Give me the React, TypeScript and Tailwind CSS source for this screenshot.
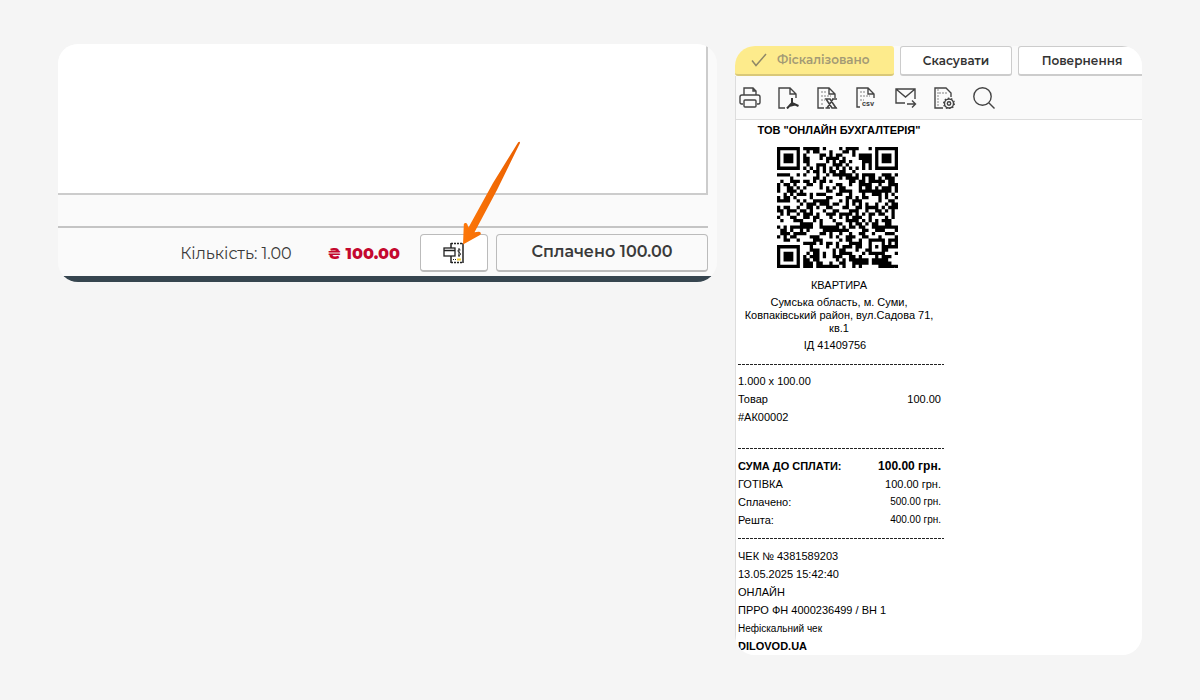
import { ReactNode } from 'react'

const CHECK_URL =
    'https://cabinet.tax.gov.ua/cashregs/check?fn=4000236499&id=4381589203&sm=100.00&time=154240&date=20250513'

// QR version 5, level L: 37 modules a side, one block of 108 data + 26 ecc bytes
const SIZE = 37
const DATA_LEN = 108
const ECC_LEN = 26
const FORMAT = '111100010011101'

function gfMul(a: number, b: number) {
    let r = 0
    while (b) {
        if (b & 1) r ^= a
        a = a & 128 ? (a << 1) ^ 0x11d : a << 1
        b >>= 1
    }
    return r
}

function codewords(text: string) {
    let bits = '0100' + text.length.toString(2).padStart(8, '0')
    for (const ch of text) bits += ch.charCodeAt(0).toString(2).padStart(8, '0')
    bits = (bits + '0000').slice(0, DATA_LEN * 8)
    const data = (bits.match(/.{1,8}/g) || []).map((b) => parseInt(b.padEnd(8, '0'), 2))
    for (let i = 0; data.length < DATA_LEN; i++) data.push(i % 2 ? 17 : 236)

    let gen = [1]
    let root = 1
    for (let i = 0; i < ECC_LEN; i++) {
        const next = [...gen, 0]
        gen.forEach((g, k) => (next[k + 1] ^= gfMul(g, root)))
        gen = next
        root = gfMul(root, 2)
    }
    const rest = [...data, ...Array(ECC_LEN).fill(0)]
    for (let i = 0; i < DATA_LEN; i++) {
        const lead = rest[i]
        gen.forEach((g, k) => (rest[i + k] ^= gfMul(g, lead)))
    }
    return [...data, ...rest.slice(DATA_LEN)]
}

function makeQr(text: string) {
    const m: number[][] = Array.from({ length: SIZE }, () => Array(SIZE).fill(-1))
    const square = (cy: number, cx: number, reach: number, light: number[]) => {
        for (let y = -reach; y <= reach; y++)
            for (let x = -reach; x <= reach; x++)
                if (m[cy + y] && m[cy + y][cx + x] !== undefined)
                    m[cy + y][cx + x] = light.includes(Math.max(Math.abs(x), Math.abs(y))) ? 0 : 1
    }
    square(3, 3, 4, [2, 4])
    square(3, SIZE - 4, 4, [2, 4])
    square(SIZE - 4, 3, 4, [2, 4])
    square(30, 30, 2, [1])
    for (let i = 8; i < SIZE - 8; i++) m[6][i] = m[i][6] = i % 2 ? 0 : 1

    const f = [...FORMAT].map(Number)
    for (let i = 0; i < 15; i++) {
        if (i < 6) m[8][i] = f[i]
        else if (i === 6) m[8][7] = f[i]
        else if (i === 7) m[8][8] = f[i]
        else if (i === 8) m[7][8] = f[i]
        else m[14 - i][8] = f[i]
        if (i < 7) m[SIZE - 1 - i][8] = f[i]
        else m[8][SIZE - 15 + i] = f[i]
    }
    m[SIZE - 8][8] = 1

    const bits = codewords(text)
        .map((b) => b.toString(2).padStart(8, '0'))
        .join('')
    let n = 0
    let up = true
    for (let right = SIZE - 1; right > 0; right -= 2) {
        if (right === 6) right = 5
        for (let k = 0; k < SIZE; k++) {
            const y = up ? SIZE - 1 - k : k
            for (const x of [right, right - 1]) {
                if (m[y][x] !== -1) continue
                m[y][x] = Number(bits[n++] || 0) ^ ((x + y) % 3 === 0 ? 1 : 0)
            }
        }
        up = !up
    }
    return m.map((row, y) => row.map((v, x) => (v ? `M${x} ${y}h1v1h-1z` : '')).join('')).join('')
}

const qrPath = makeQr(CHECK_URL)

const PAGE = 'M7 21H1V1h11l6 6v4M12 1v6h6'

const tools: { label: string; icon: ReactNode }[] = [
    {
        label: 'Друк',
        icon: (
            <>
                <path d="M5 8V1h9l3 3v4M14 1v3h3M4 17H2.5A1.5 1.5 0 0 1 1 15.500V10a2 2 0 0 1 2-2h16a2 2 0 0 1 2 2v5.500a1.500 1.500 0 0 1-1.500 1.500H18" />
                <rect x="5" y="13" width="12" height="7" rx="1" />
            </>
        ),
    },
    {
        label: 'PDF',
        icon: (
            <>
                <path d={PAGE} />
                <path strokeWidth="2" stroke="#333" d="M14 11v5l-5 5.500M14 16l6.500 3M11 19l6-1.500" />
            </>
        ),
    },
    {
        label: 'Excel',
        icon: (
            <>
                <path d={PAGE} />
                <path stroke="#aaa" strokeDasharray="2 1" d="M4 5h6M4 9h10M4 13h4M4 17h3" />
                <path strokeWidth="1.600" d="M9 12h4l6 9h-4zM19 12h-3l-6 9h3M8.500 21h4M15 12h5M16 21h4" />
            </>
        ),
    },
    {
        label: 'CSV',
        icon: (
            <>
                <path d="M4 20H1V1h11l6 6v4M12 1v6h6" />
                <path stroke="#aaa" strokeDasharray="2 1" d="M4 5h6M4 9h10M4 13h4" />
                <text x="6" y="19" fontSize="7" fontWeight="700" fontFamily="Inter, sans-serif" fill="#444" stroke="none">
                    csv
                </text>
            </>
        ),
    },
    {
        label: 'Надіслати',
        icon: <path d="M10 16H1V2h19v10M1 2l9.500 8L20 2M12 17h8M17 13.500l3.500 3.500-3.500 3.500" />,
    },
    {
        label: 'Налаштування',
        icon: (
            <>
                <path d="M9 21H1V1h11l5 5v4" />
                <path stroke="#aaa" strokeDasharray="2 1" d="M4 2v18M5 6h8" />
                <circle cx="15" cy="16.500" r="4.500" />
                <circle cx="15" cy="16.500" r="1.700" />
                <circle cx="15" cy="16.500" r="5.300" strokeDasharray="1.500 1.800" />
            </>
        ),
    },
    {
        label: 'Пошук',
        icon: (
            <>
                <circle cx="9.500" cy="9.500" r="8.700" />
                <path d="M16 16l5.500 5.500" />
            </>
        ),
    },
]

function Divider() {
    return <hr className="h-px border-0 bg-[repeating-linear-gradient(90deg,#222_0_3px,transparent_3px_4px)]" />
}

function Line({ left, right, size = '' }: { left: string; right?: string; size?: string }) {
    return (
        <div className="flex items-center justify-between pr-[3px] leading-[18px]">
            <span>{left}</span>
            <span className={size}>{right}</span>
        </div>
    )
}

function SalePanel() {
    return (
        <section className="flex min-w-0 flex-col overflow-hidden rounded-[20px] bg-[#fafafa] text-[#3a3a3a]">
            <div className="mr-[9px] h-[151px] border-r-2 border-b-2 border-[#ccc] bg-white"></div>
            <div className="mt-[31px] mr-[9px] flex h-[50px] items-start justify-end border-t-2 border-[#c4c4c4] pt-[6px]">
                <p className="mr-9 text-[16px] leading-10">Кількість: 1.00</p>
                <p className="mr-5 text-[16px] leading-10 font-extrabold text-[#c4082f]">₴ 100.00</p>
                <button
                    aria-label="Чек"
                    className="relative mr-2 flex h-[38px] w-[68px] items-center justify-center rounded-[4px] border border-b-2 border-[#bbb] bg-white"
                >
                    <svg width="22" height="22" viewBox="0 0 22 22" fill="none" stroke="#222">
                        <path strokeWidth="1.500" strokeDasharray="2 1" d="M8 1.500h12M8 20.500h12" />
                        <path strokeWidth="1.500" d="M8 1v5M8 14v7M20 1v20" />
                        <rect x="1" y="6" width="11" height="8" fill="#fff" strokeWidth="1.300" />
                        <path strokeWidth="1.500" d="M1 8.500h11" />
                        <path d="M17.500 8c-3-1.500-3 2-1.200 2.500s1.800 4-1.300 2.500M16 6v9" />
                        <path stroke="#f3cf3a" strokeWidth="2" d="M14 17.500h4" />
                        <path strokeDasharray="1 1" d="M10 17.500h3" />
                    </svg>
                    <svg
                        className="pointer-events-none absolute bottom-[24px] left-[39px]"
                        width="64"
                        height="106"
                        viewBox="0 0 64 106"
                    >
                        <defs>
                            <linearGradient id="arrow" x1="0" x2="1" y1="0.4" y2="0.6">
                                <stop offset="0" stopColor="#ff7a0a" />
                                <stop offset="1" stopColor="#e85d00" />
                            </linearGradient>
                        </defs>
                        <path
                            fill="url(#arrow)"
                            d="M60 3c.2-1.500-1-1.800-1.800-.7L33 43 8.500 87.500 7.200 84c-.6-1.600-3.400-1.200-3.400.5L3 104.500 20 95c1.600-1 .8-3.600-1.300-3.300l-4.200.6L37 50z"
                        />
                    </svg>
                </button>
                <button className="h-[38px] w-[212px] rounded-[4px] border border-b-2 border-[#bbb] pb-[2px] text-[16px] font-semibold">
                    Сплачено 100.00
                </button>
            </div>
            <div className="h-[6px] bg-[#36454f]"></div>
        </section>
    )
}

function Receipt() {
    return (
        <div className="border-l border-[#ddd] bg-white font-['Liberation_Sans',Arial,sans-serif] text-[11px] text-black">
            <div className="w-[208px] pt-px pl-[2px]">
                <div className="pr-1 text-center">
                    <h1 className="leading-[18px] font-bold">ТОВ "ОНЛАЙН БУХГАЛТЕРІЯ"</h1>
                    <div className="py-2 pr-[3px]">
                        <svg
                            className="mx-auto size-[121px]"
                            viewBox={`0 0 ${SIZE} ${SIZE}`}
                            role="img"
                            aria-label="QR-код чека"
                        >
                            <path d={qrPath} />
                        </svg>
                    </div>
                    <p className="leading-[18px]">КВАРТИРА</p>
                    <p className="px-1 pt-[2px] pb-px leading-[13px]">
                        Сумська область, м. Суми, Ковпаківський район, вул.Садова 71, кв.1
                    </p>
                    <p className="pr-2 leading-[18px]">ІД 41409756</p>
                </div>
                <div className="mt-[10px] mb-[7px]">
                    <Divider />
                </div>
                <Line left="1.000 x 100.00" />
                <Line left="Товар" right="100.00" />
                <Line left="#АК00002" />
                <div className="mt-[22px] mb-2">
                    <Divider />
                </div>
                <div className="font-bold">
                    <Line left="СУМА ДО СПЛАТИ:" right="100.00 грн." size="text-[12px]" />
                </div>
                <Line left="ГОТІВКА" right="100.00 грн." />
                <Line left="Сплачено:" right="500.00 грн." size="text-[10px]" />
                <Line left="Решта:" right="400.00 грн." size="text-[10px]" />
                <div className="mt-[9px] mb-2">
                    <Divider />
                </div>
                <Line left="ЧЕК № 4381589203" />
                <Line left="13.05.2025 15:42:40" />
                <Line left="ОНЛАЙН" />
                <Line left="ПРРО ФН 4000236499 / ВН 1" />
                <p className="text-[10px] leading-[19px]">Нефіскальний чек</p>
                <p className="leading-[17px] font-bold">DILOVOD.UA</p>
            </div>
        </div>
    )
}

function ReceiptPanel() {
    return (
        <section className="mt-[2px] min-w-0 overflow-hidden rounded-[20px] bg-[#fafafa]">
            <div className="flex gap-[6px] text-[12px] font-semibold whitespace-nowrap text-[#333]">
                <button className="flex h-[30px] w-[159px] shrink-0 items-center gap-[10px] rounded-[3px] border-b-2 border-[#d9c878] bg-[#fdeb8c] pl-4 text-[#a39a75]">
                    <svg width="16" height="14" viewBox="0 0 16 14" fill="none" stroke="#8f8868" strokeWidth="1.500">
                        <path d="M1 7.500l4 5L15 1" />
                    </svg>
                    Фіскалізовано
                </button>
                <button className="h-[30px] w-28 shrink-0 rounded-[3px] border border-b-2 border-[#ccc] bg-white">
                    Скасувати
                </button>
                <button className="h-[30px] w-32 shrink-0 rounded-[3px] border border-b-2 border-[#ccc] bg-white">
                    Повернення
                </button>
            </div>
            <div className="flex h-11 items-center gap-[17px] border-b border-l border-[#ddd] pl-[3px]">
                {tools.map((t) => (
                    <button key={t.label} aria-label={t.label}>
                        <svg width="22" height="22" viewBox="0 0 22 22" fill="none" stroke="#444" strokeWidth="1.400">
                            {t.icon}
                        </svg>
                    </button>
                ))}
            </div>
            <Receipt />
        </section>
    )
}

export default function App() {
    return (
        <main className="grid min-h-screen grid-cols-[659fr_407fr] items-start gap-[18px] bg-[#f5f5f5] px-[58px] py-11 font-[Montserrat,Inter,sans-serif]">
            <SalePanel />
            <ReceiptPanel />
        </main>
    )
}
